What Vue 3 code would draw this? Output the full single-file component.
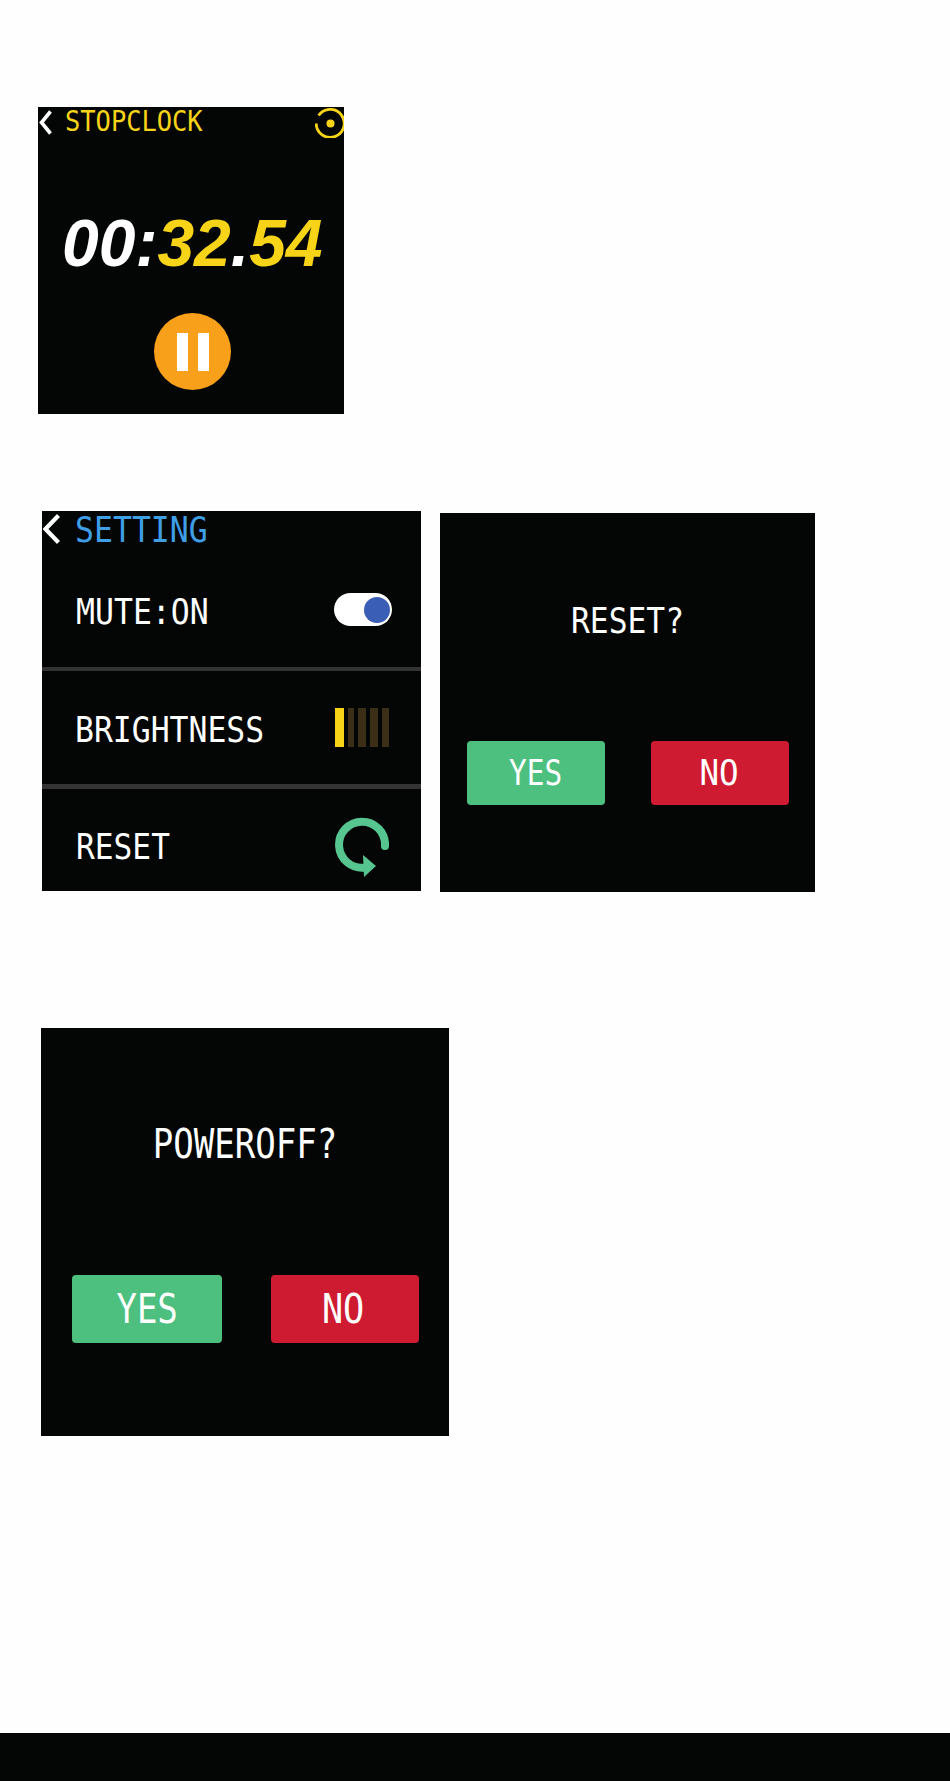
<script setup>
const brightnessBars = [
  { on: true, width: 9 },
  { on: false, width: 6 },
  { on: false, width: 8 },
  { on: false, width: 8 },
  { on: false, width: 7 }
]
</script>

<template>
  <div class="page">
    <section class="screen stopclock">
      <header class="clock-head">
        <svg class="chevron-sm" viewBox="0 0 13 25" width="13" height="25">
          <path d="M11.5 1.5 L2.5 12.5 L11.5 23.5" fill="none" stroke="#fff" stroke-width="3.6" />
        </svg>
        <span class="mono title-yellow">STOPCLOCK</span>
        <svg class="target" viewBox="0 0 29 30" width="29" height="30">
          <path d="M3.6 7.5 A14 14 0 1 1 1.2 15.5" fill="none" stroke="#f7d417" stroke-width="2.8" />
          <circle cx="15.5" cy="15.5" r="4" fill="#f7d417" />
        </svg>
      </header>
      <div class="time"><span>00:</span><em>32</em><span>.</span><em>54</em></div>
      <div class="pause">
        <i></i>
        <i></i>
      </div>
    </section>

    <div class="row-two">
      <section class="screen settings">
        <header class="settings-head">
          <svg viewBox="0 0 17 30" width="17" height="30">
            <path d="M15.5 1.5 L2.5 15 L15.5 28.5" fill="none" stroke="#fff" stroke-width="4.2" />
          </svg>
          <span class="mono title-blue">SETTING</span>
        </header>
        <div class="setting-row mute">
          <span class="mono label">MUTE:ON</span>
          <div class="toggle"><b></b></div>
        </div>
        <div class="setting-row bright">
          <span class="mono label">BRIGHTNESS</span>
          <div class="bars">
            <i
              v-for="(bar, i) in brightnessBars"
              :key="i"
              :class="{ on: bar.on }"
              :style="{ width: bar.width + 'px' }"
            ></i>
          </div>
        </div>
        <div class="setting-row reset">
          <span class="mono label">RESET</span>
          <svg viewBox="0 0 54 60" width="54" height="60">
            <path d="M50 29 A23 23 0 1 0 30 50.5" fill="none" stroke="#57c58f" stroke-width="8" stroke-linecap="round" />
            <path d="M28 38 L41 49 L29 60 Z" fill="#57c58f" />
          </svg>
        </div>
      </section>

      <section class="screen confirm small">
        <div class="mono prompt">RESET?</div>
        <div class="actions">
          <button class="yes"><span class="mono">YES</span></button>
          <button class="no"><span class="mono">NO</span></button>
        </div>
      </section>
    </div>

    <section class="screen confirm large">
      <div class="mono prompt">POWEROFF?</div>
      <div class="actions">
        <button class="yes"><span class="mono">YES</span></button>
        <button class="no"><span class="mono">NO</span></button>
      </div>
    </section>

    <div class="foot"></div>
  </div>
</template>

<style>
html, body {
  margin: 0;
  background: #fefefe;
}
</style>

<style scoped>
.page {
  width: 950px;
  height: 1781px;
  display: flex;
  flex-direction: column;
  background: #fefefe;
  overflow: hidden;
}

.screen {
  background: #040606;
  color: #fff;
  box-sizing: border-box;
}

.mono {
  display: inline-block;
  font-family: "DejaVu Sans Mono", monospace;
  font-size: 36px;
  line-height: 44px;
  white-space: nowrap;
  transform: scaleX(0.867);
  transform-origin: left center;
}

/* stopclock */
.stopclock {
  width: 306px;
  height: 307px;
  margin: 107px 0 0 38px;
}

.clock-head {
  height: 32px;
  display: flex;
  align-items: center;
  padding-left: 1px;
}

.title-yellow {
  font-size: 29px;
  line-height: 26px;
  color: #f7d417;
  margin: -4px 0 0 13px;
  transform: scaleX(0.876);
}

.chevron-sm {
  margin-top: -2px;
}

.target {
  margin-left: auto;
  margin-top: -1px;
}

.time {
  margin: 69px 0 0 24px;
  font-family: "Liberation Sans", Arial, sans-serif;
  font-size: 66px;
  font-weight: 700;
  font-style: italic;
  line-height: 70px;
  white-space: nowrap;
}

.time em {
  color: #f7d417;
}

.pause {
  width: 77px;
  height: 77px;
  margin: 35px 0 0 116px;
  border-radius: 50%;
  background: #f9a01b;
  display: flex;
  align-items: center;
  justify-content: center;
  gap: 10px;
}

.pause i {
  width: 11px;
  height: 38px;
  background: #fff;
}

/* settings */
.row-two {
  display: flex;
  align-items: flex-start;
  gap: 19px;
  margin: 97px 0 0 42px;
}

.settings {
  width: 379px;
  height: 380px;
}

.settings-head {
  height: 44px;
  display: flex;
  align-items: center;
  padding-left: 1px;
}

.settings-head svg {
  margin-top: -8px;
}

.title-blue {
  line-height: 36px;
  color: #3f9fe6;
  margin: -6px 0 0 15px;
  transform: scaleX(0.875);
}

.setting-row {
  display: flex;
  align-items: center;
  justify-content: space-between;
  padding: 0 29px 0 34px;
}

.mute {
  height: 112px;
  border-bottom: 4px solid #333;
}

.mute .label {
  margin-top: 2px;
  transform: scaleX(0.875);
}

.bright {
  height: 113px;
  border-bottom: 5px solid #333;
}

.bright .label {
  margin: 4px 0 0 -1px;
  transform: scaleX(0.873);
}

.reset {
  height: 102px;
  padding-top: 10px;
  box-sizing: border-box;
}

.reset .label {
  margin-top: 4px;
}

.reset svg {
  margin: 3px 3px 0 0;
}

.toggle {
  width: 58px;
  height: 33px;
  margin-bottom: 3px;
  border-radius: 17px;
  background: #fff;
  display: flex;
  align-items: center;
  justify-content: flex-end;
  padding-right: 2px;
  box-sizing: border-box;
}

.toggle b {
  width: 26px;
  height: 26px;
  border-radius: 50%;
  background: #3a5db5;
}

.bars {
  display: flex;
  gap: 4px;
  width: 54px;
  height: 39px;
  margin-right: 3px;
}

.bars i {
  background: #3b3017;
}

.bars i.on {
  background: #f7d417;
}

/* confirm dialogs */
.confirm {
  text-align: center;
}

.prompt {
  display: block;
  transform-origin: center center;
}

.actions {
  display: flex;
}

.actions button {
  border: 0;
  padding: 0;
  border-radius: 4px;
  color: #fff;
  display: flex;
  align-items: center;
  justify-content: center;
}

.yes {
  background: #4dc07f;
}

.no {
  background: #cf1b32;
}

.actions .mono {
  transform-origin: center center;
}

.small {
  width: 375px;
  height: 379px;
  margin-top: 2px;
  padding-top: 86px;
}

.small .prompt {
  transform: scaleX(0.87);
}

.small .actions {
  margin-top: 98px;
  padding-left: 27px;
  gap: 46px;
}

.small button {
  width: 138px;
  height: 64px;
}

.small button .mono {
  font-size: 35px;
  transform: scaleX(0.84);
}

.small .no .mono {
  margin-right: 2px;
  transform: scaleX(0.93);
}

.large {
  width: 408px;
  height: 408px;
  margin: 136px 0 0 41px;
  padding-top: 91px;
}

.large .prompt {
  font-size: 40px;
  line-height: 50px;
  transform: scaleX(0.852);
}

.large .actions {
  margin-top: 106px;
  padding-left: 31px;
  gap: 49px;
}

.large button {
  width: 150px;
  height: 68px;
}

.large .no {
  width: 148px;
}

.large button .mono {
  font-size: 40px;
  transform: scaleX(0.85);
}

.large .no .mono {
  margin-right: 4px;
  transform: scaleX(0.88);
}

.foot {
  margin-top: auto;
  height: 48px;
  background: #040606;
}
</style>
